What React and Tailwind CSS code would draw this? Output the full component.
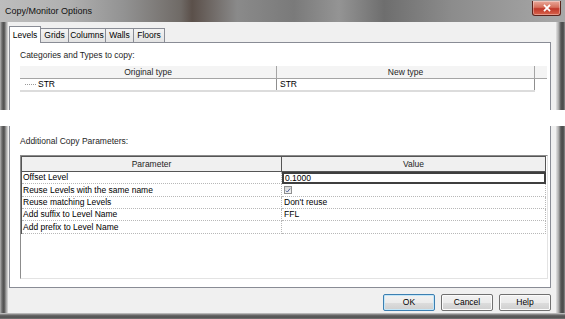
import React from 'react';

const frameLeft = 'bg-[linear-gradient(to_right,#b4b4b4,#6b6b6b_25%,#4d4d4d_50%,#9c9c9c_75%,#dedede)]';
const frameRight = 'bg-[linear-gradient(to_right,#e2e2e2,#a9a9a9_30%,#555555_55%,#4a4a4a_80%,#8e8e8e)]';

const params = [
  { name: 'Offset Level', value: '0.1000', h: 'h-[12px]', edit: true },
  { name: 'Reuse Levels with the same name', check: true, h: 'h-[13px]' },
  { name: 'Reuse matching Levels', value: "Don't reuse", h: 'h-[12px]' },
  { name: 'Add suffix to Level Name', value: 'FFL', h: 'h-[12px]' },
  { name: 'Add prefix to Level Name', value: '', h: 'h-[13px]' },
];

function Tab({ label, width, active }) {
  if (active) {
    return (
      <div className={`relative z-10 -mb-px flex h-[17px] ${width} items-start justify-center border border-b-0 border-[#898c95] bg-white pt-[2px]`}>
        {label}
      </div>
    );
  }
  return (
    <div className={`flex h-[14px] ${width} items-center justify-center border border-b-0 border-l-0 border-[#898c95] bg-[linear-gradient(#f3f3f3,#e3e3e3)]`}>
      {label}
    </div>
  );
}

function Button({ children, primary }) {
  return (
    <button
      type="button"
      className={`flex h-[17px] w-[52px] items-center justify-center rounded-[2px] border bg-[linear-gradient(#f2f2f2_0%,#ebebeb_50%,#dddddd_51%,#cfcfcf_100%)] text-[8.5px] text-black ${
        primary ? 'border-[#3c7fb1] shadow-[inset_0_0_0_1px_#c3e6f8]' : 'border-[#707070] shadow-[inset_0_0_0_1px_#fbfbfb]'
      }`}
    >
      {children}
    </button>
  );
}

function Checkbox() {
  return (
    <span className="flex h-[8px] w-[8px] items-center justify-center border border-[#8e8f8f] bg-[linear-gradient(#d8d8d8,#f4f4f4)]">
      <svg viewBox="0 0 8 8" className="h-[7px] w-[7px]">
        <path d="M1.2 4.2 L3.1 6.1 L6.8 1.4" fill="none" stroke="#4a5f97" strokeWidth="1.3" />
      </svg>
    </span>
  );
}

export default function App() {
  return (
    <div className="flex h-[319px] w-[565px] flex-col overflow-hidden bg-white font-['Liberation_Sans',Arial,sans-serif] text-[8.5px] text-black">
      {/* title bar */}
      <div className="flex h-[22px] shrink-0 items-start justify-between bg-[linear-gradient(to_right,#bdbdbd_0%,#b0b0b0_12%,#929292_22%,#6f6a66_32%,#5b504a_34%,#8a8a8a_42%,#7a7a7a_52%,#949494_60%,#6e6e6e_68%,#8c8c8c_80%,#9a9a9a_90%,#a8a8a8_100%)] pl-[5px] pr-[4px]">
        <span className="mt-[6px] text-[9px] leading-[11px] text-[#111]">Copy/Monitor Options</span>
        <div className="mt-[1px] flex h-[15px] w-[29px] items-center justify-center rounded-b-[3px] border border-t-0 border-[#5c231b] bg-[linear-gradient(#e9a99a,#d6705c_45%,#c0392a_55%,#d8644c)] shadow-[inset_0_0_0_1px_rgba(255,255,255,0.35)]">
          <svg viewBox="0 0 10 10" className="h-[8px] w-[8px]">
            <path d="M2 2 L8 8 M8 2 L2 8" stroke="#fff" strokeWidth="2.2" strokeLinecap="square" />
          </svg>
        </div>
      </div>

      {/* upper part */}
      <div className="flex h-[88px] shrink-0">
        <div className={`w-[8px] ${frameLeft}`} />
        <div className="flex flex-1 flex-col bg-[#f0f0f0] pl-[1px] pr-[5px] pt-[4px]">
          <div className="flex h-[16px] items-end">
            <Tab label="Levels" width="w-[32px]" active />
            <Tab label="Grids" width="w-[28px]" />
            <Tab label="Columns" width="w-[37px]" />
            <Tab label="Walls" width="w-[28px]" />
            <Tab label="Floors" width="w-[31px]" />
          </div>
          <div className="flex flex-1 flex-col border border-b-0 border-[#898c95] bg-white pl-[10px] pt-[6px]">
            <div className="h-[12px] leading-[12px] text-[#1e1e1e]">Categories and Types to copy:</div>
            <div className="mt-[5px] flex h-[13px] w-[527px] border-b border-[#a5a5a5] bg-[#f4f4f4] leading-[12px] text-[#1e1e1e]">
              <div className="w-[257px] border-r border-[#a5a5a5] text-center">Original type</div>
              <div className="w-[258px] border-r border-[#a5a5a5] text-center">New type</div>
              <div className="flex-1" />
            </div>
            <div className="flex h-[13px] w-[515px] border-b-2 border-[#dcdcdc] leading-[11px]">
              <div className="flex w-[257px] items-center border-r border-[#8f8f8f] pl-[5px]">
                <span className="mr-[2px] w-[11px] border-t border-dotted border-[#9a9a9a]" />
                STR
              </div>
              <div className="flex-1 border-r border-[#8f8f8f] pl-[3px]">STR</div>
            </div>
          </div>
        </div>
        <div className={`w-[9px] ${frameRight}`} />
      </div>

      {/* splice band */}
      <div className="h-[16px] shrink-0 bg-white" />

      {/* lower part */}
      <div className="flex h-[187px] shrink-0">
        <div className={`w-[8px] ${frameLeft}`} />
        <div className="flex flex-1 flex-col bg-[#f0f0f0] pl-[1px] pr-[5px]">
          <div className="flex flex-col border border-t-0 border-[#898c95] bg-white pb-[8px] pl-[10px] pt-[9px]">
            <div className="h-[12px] leading-[12px] text-[#1e1e1e]">Additional Copy Parameters:</div>
            <div className="mt-[8px] h-[124px] w-[528px] border-b border-l border-r border-t border-b-[#e3e3e3] border-l-[#8c8c8c] border-r-[#e3e3e3] border-t-[#8c8c8c] bg-white">
              <div className="flex h-[16px] w-[525px] border border-[#555555] bg-[#f0f0f0] leading-[14px] text-[#1e1e1e]">
                <div className="w-[260px] border-r border-[#555555] text-center">Parameter</div>
                <div className="flex-1 text-center">Value</div>
              </div>
              {params.map((p) => (
                <div key={p.name} className={`flex ${p.h} w-[525px] border-l border-[#555555]`}>
                  <div className="flex w-[260px] items-center border-b border-r border-dotted border-[#b8b8b8] pl-[1px]">
                    {p.name}
                  </div>
                  {p.edit ? (
                    <div className="flex flex-1 items-center border-2 border-[#3f3f3f] pl-[1px] leading-none">
                      {p.value}
                    </div>
                  ) : (
                    <div className="flex flex-1 items-center border-b border-r border-dotted border-[#b8b8b8] pl-[2px]">
                      {p.check ? <Checkbox /> : p.value}
                    </div>
                  )}
                </div>
              ))}
            </div>
          </div>
          <div className="mt-[6px] flex justify-end gap-[6px] pr-[0px]">
            <Button primary>OK</Button>
            <Button>Cancel</Button>
            <Button>Help</Button>
          </div>
        </div>
        <div className={`w-[9px] ${frameRight}`} />
      </div>

      {/* bottom frame */}
      <div className="h-[6px] shrink-0 bg-[linear-gradient(#d0d0d0,#6a6a6a_35%,#505050_70%,#7a7a7a)]" />
    </div>
  );
}
